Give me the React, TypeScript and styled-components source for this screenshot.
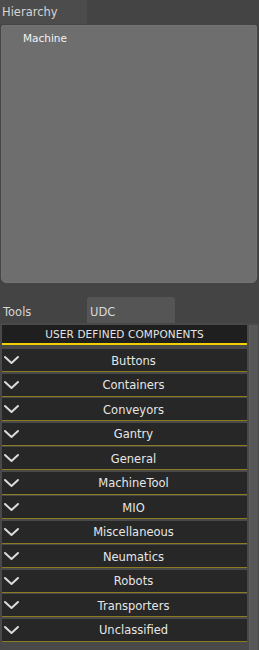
import React from "react";
import styled, { createGlobalStyle } from "styled-components";

const GlobalStyle = createGlobalStyle`
  html, body {
    margin: 0;
    padding: 0;
    background: #444444;
  }
  body {
    font-family: "DejaVu Sans", "Liberation Sans", sans-serif;
  }
`;

const Page = styled.div`
  width: 259px;
  height: 650px;
  background: #444444;
  display: flex;
  flex-direction: column;
  overflow: hidden;
`;

const TabBar = styled.div`
  display: flex;
  height: 26px;
  align-items: flex-end;
`;

const Tab = styled.div<{ $active?: boolean; $w: number }>`
  width: ${(p) => p.$w}px;
  height: 100%;
  box-sizing: border-box;
  padding: 3px 0 0 3px;
  display: flex;
  align-items: center;
  font-size: 11.5px;
  color: #d8d8d8;
  background: ${(p) => (p.$active ? "#555555" : "transparent")};
  border-radius: 3px 3px 0 0;
`;

const TopTab = styled.div`
  width: 87px;
  height: 24px;
  box-sizing: border-box;
  padding-left: 2px;
  display: flex;
  align-items: center;
  font-size: 11.5px;
  color: #d4d4d4;
  background: #4c4c4c;
`;

const HierarchyPanel = styled.div`
  margin: 1px 2px 0 1px;
  height: 258px;
  box-sizing: border-box;
  background: #6e6e6e;
  border: 1px solid #737373;
  border-radius: 2px 2px 5px 5px;
  padding: 5px 0 0 21px;
`;

const TreeItem = styled.div`
  font-size: 10.5px;
  color: #f2f2f2;
  line-height: 14px;
`;

const Spacer = styled.div`
  height: 14px;
`;

const ListArea = styled.div`
  flex: 1;
  display: flex;
  background: #494949;
  padding: 2px 0 0 2px;
  gap: 2px;
`;

const List = styled.div`
  width: 245px;
  display: flex;
  flex-direction: column;
`;

const Scrollbar = styled.div`
  flex: 1;
  margin-right: 1px;
  background: #575757;
  border-left: 1px solid #606060;
`;

const Header = styled.div`
  height: 18px;
  background: #1f1f1f;
  border-bottom: 2px solid #f0d000;
  display: flex;
  align-items: center;
  justify-content: center;
  font-size: 10.5px;
  letter-spacing: 0.1px;
  color: #e4e4e4;
  margin-bottom: 4px;
`;

const Row = styled.div`
  height: 22px;
  background: #272727;
  border-bottom: 1px solid #8d7b22;
  margin-bottom: 1.5px;
  display: flex;
  align-items: center;
`;

const Chevron = styled.svg`
  width: 17px;
  height: 10px;
  margin-left: 1px;
  flex-shrink: 0;
`;

const RowLabel = styled.span`
  flex: 1;
  text-align: center;
  font-size: 11.5px;
  color: #e6e6e6;
  padding-top: 1px;
`;

const categories = [
  "Buttons",
  "Containers",
  "Conveyors",
  "Gantry",
  "General",
  "MachineTool",
  "MIO",
  "Miscellaneous",
  "Neumatics",
  "Robots",
  "Transporters",
  "Unclassified",
];

export default function App() {
  return (
    <Page>
      <GlobalStyle />
      <TopTab>Hierarchy</TopTab>
      <HierarchyPanel>
        <TreeItem>Machine</TreeItem>
      </HierarchyPanel>
      <Spacer />
      <TabBar>
        <Tab $w={87}>Tools</Tab>
        <Tab $w={88} $active>
          UDC
        </Tab>
      </TabBar>
      <ListArea>
        <List>
          <Header>USER DEFINED COMPONENTS</Header>
          {categories.map((c) => (
            <Row key={c}>
              <Chevron viewBox="0 0 17 10">
                <path
                  d="M2 2 L8.5 8 L15 2"
                  fill="none"
                  stroke="#dcdcdc"
                  strokeWidth="2"
                  strokeLinecap="round"
                  strokeLinejoin="round"
                />
              </Chevron>
              <RowLabel>{c}</RowLabel>
            </Row>
          ))}
        </List>
        <Scrollbar />
      </ListArea>
    </Page>
  );
}
